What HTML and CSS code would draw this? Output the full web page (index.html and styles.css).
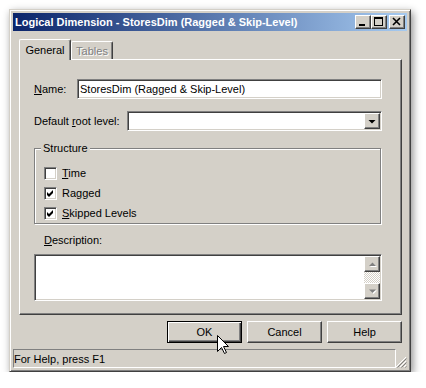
FILE: index.html
```html
<!DOCTYPE html>
<html lang="en">
<head>
<meta charset="UTF-8">
<title>Logical Dimension - StoresDim (Ragged &amp; Skip-Level)</title>
<link rel="stylesheet" href="styles.css">
</head>
<body>

<div class="window">
  <div class="titlebar">
    <span class="title">Logical Dimension - StoresDim (Ragged &amp; Skip-Level)</span>
    <div class="caption">
      <span class="cap-btn">
        <svg width="14" height="12" viewBox="0 0 14 12"><rect x="3" y="8" width="6" height="2" fill="#000"/></svg>
      </span>
      <span class="cap-btn">
        <svg width="14" height="12" viewBox="0 0 14 12"><rect x="2.5" y="1.5" width="8" height="8" fill="none" stroke="#000"/><rect x="2" y="1" width="9" height="2" fill="#000"/></svg>
      </span>
      <span class="cap-btn close">
        <svg width="14" height="12" viewBox="0 0 14 12"><path d="M3 2 L10 9 M10 2 L3 9" stroke="#000" stroke-width="1.6"/></svg>
      </span>
    </div>
  </div>

  <div class="client">
    <div class="tabs">
      <div class="tab active">General</div>
      <div class="tab off">Tables</div>
    </div>

    <div class="panel">
      <div class="row">
        <span class="lbl name-lbl"><u>N</u>ame:</span>
        <div class="field name-field">StoresDim (Ragged &amp; Skip-Level)</div>
      </div>
      <div class="row">
        <span class="lbl root-lbl">Default <u>r</u>oot level:</span>
        <div class="field combo">
          <span class="raised combo-btn">
            <svg width="14" height="14" viewBox="0 0 14 14"><path d="M3.5 6 H10.5 L7 9.5 Z" fill="#000"/></svg>
          </span>
        </div>
      </div>

      <div class="group">
        <span class="legend">Structure</span>
        <div class="check"><span class="box"></span><span><u>T</u>ime</span></div>
        <div class="check">
          <span class="box"><svg width="9" height="9" viewBox="0 0 9 9"><path d="M1 3 L3 5 L7 1 L7 4 L3 8 L1 6 Z" fill="#000"/></svg></span>
          <span>Ragged</span>
        </div>
        <div class="check">
          <span class="box"><svg width="9" height="9" viewBox="0 0 9 9"><path d="M1 3 L3 5 L7 1 L7 4 L3 8 L1 6 Z" fill="#000"/></svg></span>
          <span><u>S</u>kipped Levels</span>
        </div>
      </div>

      <div class="desc-lbl"><u>D</u>escription:</div>
      <div class="field memo">
        <div class="vscroll">
          <span class="raised scroll-btn">
            <svg width="14" height="14" viewBox="0 0 14 14"><path d="M4 9 H11 L7.5 5.5 Z" fill="#fff" transform="translate(1 1)"/><path d="M4 9 H11 L7.5 5.5 Z" fill="#808080"/></svg>
          </span>
          <span class="track"></span>
          <span class="raised scroll-btn">
            <svg width="14" height="14" viewBox="0 0 14 14"><path d="M4 5.5 H11 L7.5 9 Z" fill="#fff" transform="translate(1 1)"/><path d="M4 5.5 H11 L7.5 9 Z" fill="#808080"/></svg>
          </span>
        </div>
      </div>
    </div>

    <div class="buttons">
      <button class="btn default">OK</button>
      <button class="btn">Cancel</button>
      <button class="btn">Help</button>
    </div>
  </div>

  <div class="statusbar">
    <div class="status-pane">For Help, press F1</div>
    <div class="grip">
      <svg width="11" height="12" viewBox="0 0 11 12">
        <path d="M10 1 L0 11 M10 5 L4 11 M10 9 L8 11" stroke="#fff"/>
        <path d="M10.5 2.5 L1.5 11.5 M10.5 6.5 L5.5 11.5 M10.5 10.5 L9.5 11.5" stroke="#808080"/>
      </svg>
    </div>
  </div>
</div>

<svg class="cursor" width="13" height="20" viewBox="0 0 13 20">
  <path d="M0.5 0.5 V16.5 L4.5 12.5 L7.5 18.5 L9.5 17.5 L6.5 11.5 H11.5 Z" fill="#fff" stroke="#000"/>
</svg>

</body>
</html>
```

FILE: styles.css
```css
* {
  box-sizing: border-box;
}
body {
  margin: 0;
  background: #fff;
  font-family: 'Liberation Sans', Arial, sans-serif;
  font-size: 11px;
  color: #000;
}
.window {
  width: 402px;
  height: 363px;
  margin: 9px 0 0 9px;
  padding: 3px;
  display: flex;
  flex-direction: column;
  background: #d4d0c8;
  border: 1px solid;
  border-color: #d4d0c8 #404040 #404040 #d4d0c8;
  box-shadow: inset 1px 1px #fff, inset -1px -1px #808080, 2px 3px 8px rgba(0, 0, 0, 0.45);
}
.titlebar {
  height: 18px;
  padding: 0 2px;
  display: flex;
  align-items: center;
  background: linear-gradient(to right, #0a246a, #a6caf0);
  color: #fff;
  font-weight: bold;
}
.title {
  flex: 1;
  white-space: nowrap;
}
.caption {
  display: flex;
}
.cap-btn, .raised {
  background: #d4d0c8;
  border: 1px solid;
  border-color: #fff #404040 #404040 #fff;
  box-shadow: inset -1px -1px #808080;
}
.cap-btn {
  width: 16px;
  height: 14px;
  display: flex;
}
.cap-btn.close {
  margin-left: 2px;
}
.client {
  flex: 1;
  padding: 8px 5px 0 6px;
  display: flex;
  flex-direction: column;
}
.tabs {
  height: 20px;
  display: flex;
  align-items: flex-end;
  position: relative;
  z-index: 1;
}
.tab {
  display: flex;
  align-items: center;
  justify-content: center;
  background: #d4d0c8;
  border-top: 1px solid #fff;
  border-left: 1px solid #fff;
  border-right: 1px solid #404040;
  box-shadow: inset -1px 0 #808080;
  border-radius: 2px 2px 0 0;
}
.tab.active {
  width: 52px;
  height: 21px;
  margin-bottom: -1px;
  padding-bottom: 1px;
}
.tab.off {
  width: 42px;
  height: 18px;
  color: #808080;
  text-shadow: 1px 1px #fff;
}
.panel {
  height: 256px;
  padding: 19px 0 0 14px;
  border: 1px solid;
  border-color: #fff #404040 #404040 #fff;
  box-shadow: inset -1px -1px #808080;
}
.row {
  height: 20px;
  display: flex;
  align-items: center;
}
.row + .row {
  margin-top: 12px;
}
.name-lbl {
  width: 43px;
}
.root-lbl {
  width: 93px;
}
.field {
  background: #fff;
  border: 1px solid;
  border-color: #808080 #fff #fff #808080;
  box-shadow: inset 1px 1px #404040, inset -1px -1px #d4d0c8;
  padding: 1px;
}
.name-field {
  width: 305px;
  height: 20px;
  padding-left: 2px;
  line-height: 16px;
}
.combo {
  width: 255px;
  height: 20px;
  display: flex;
  justify-content: flex-end;
}
.combo-btn {
  width: 16px;
  height: 16px;
  display: flex;
}
.group {
  position: relative;
  width: 347px;
  height: 76px;
  margin-top: 17px;
  padding: 14px 0 0 9px;
  border: 1px solid #808080;
  box-shadow: inset 1px 1px #fff, 1px 1px #fff;
}
.legend {
  position: absolute;
  top: -8px;
  left: 6px;
  padding: 0 2px;
  line-height: 14px;
  background: #d4d0c8;
}
.check {
  height: 20px;
  display: flex;
  align-items: center;
}
.box {
  width: 13px;
  height: 13px;
  margin-right: 5px;
  padding: 1px;
  display: flex;
  background: #fff;
  border: 1px solid;
  border-color: #808080 #fff #fff #808080;
  box-shadow: inset 1px 1px #404040, inset -1px -1px #d4d0c8;
}
.desc-lbl {
  margin-top: 10px;
  padding-left: 10px;
  line-height: 13px;
}
.memo {
  width: 348px;
  height: 47px;
  margin-top: 7px;
  display: flex;
  justify-content: flex-end;
}
.vscroll {
  width: 16px;
  display: flex;
  flex-direction: column;
}
.scroll-btn {
  width: 16px;
  height: 16px;
  display: flex;
}
.track {
  flex: 1;
  background: repeating-conic-gradient(#fff 0 25%, #d4d0c8 0 50%) 0 0 / 2px 2px;
}
.buttons {
  margin-top: 6px;
  display: flex;
  justify-content: flex-end;
  gap: 5px;
}
.btn {
  width: 75px;
  height: 22px;
  padding: 0;
  font: inherit;
  color: #000;
  background: #d4d0c8;
  border: 1px solid;
  border-color: #fff #404040 #404040 #fff;
  box-shadow: inset -1px -1px #808080;
}
.btn.default {
  border-color: #000;
  box-shadow: inset 1px 1px #fff, inset -1px -1px #404040, inset -2px -2px #808080;
}
.statusbar {
  height: 19px;
  margin-top: 6px;
  display: flex;
}
.status-pane {
  flex: 1;
  display: flex;
  align-items: center;
  border: 1px solid;
  border-color: #808080 #fff #fff #808080;
}
.grip {
  width: 11px;
  display: flex;
  align-items: flex-end;
}
.cursor {
  position: absolute;
  left: 217px;
  top: 335px;
}
```
